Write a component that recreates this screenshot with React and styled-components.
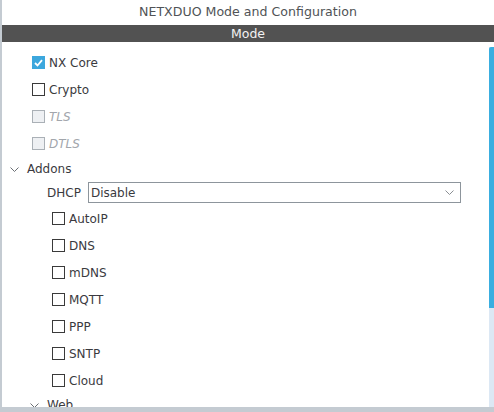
import React from 'react'
import styled, { createGlobalStyle } from 'styled-components'

const GlobalStyle = createGlobalStyle`
  html, body {
    margin: 0;
    padding: 0;
    background: #ffffff;
  }
  body {
    font-family: "DejaVu Sans", "Liberation Sans", sans-serif;
  }
`

const Chevron = ({ color = '#6b6f74' }) => (
  <svg width="9" height="5" viewBox="0 0 9 5">
    <path d="M0.5 0.5 L4.5 4.5 L8.5 0.5" fill="none" stroke={color} strokeWidth="1" />
  </svg>
)

const Check = ({ checked, disabled, indent, text }) => (
  <Row $indent={indent}>
    <Box $checked={checked} $disabled={disabled}>
      {checked && (
        <svg width="9" height="8" viewBox="0 0 9 8">
          <path d="M1 4 L3.5 6.5 L8 1.2" fill="none" stroke="#fff" strokeWidth="1.8" />
        </svg>
      )}
    </Box>
    <Label $disabled={disabled}>{text}</Label>
  </Row>
)

const topItems = [
  { text: 'NX Core', checked: true },
  { text: 'Crypto' },
  { text: 'TLS', disabled: true },
  { text: 'DTLS', disabled: true },
]

const addons = ['AutoIP', 'DNS', 'mDNS', 'MQTT', 'PPP', 'SNTP', 'Cloud']

const App = () => {
  return (
    <Frame>
      <GlobalStyle />
      <Title>NETXDUO Mode and Configuration</Title>
      <SectionBar>Mode</SectionBar>
      <Body>
        <List>
          {topItems.map((it) => (
            <Check key={it.text} indent={30} {...it} />
          ))}
          <GroupRow $indent={8} $offset={1}>
            <Chevron />
            <GroupName>Addons</GroupName>
          </GroupRow>
          <FieldRow>
            <FieldLabel>DHCP</FieldLabel>
            <Select>
              <span>Disable</span>
              <Chevron color="#8a8e93" />
            </Select>
          </FieldRow>
          {addons.map((a) => (
            <Check key={a} indent={50} text={a} />
          ))}
          <GroupRow $indent={28}>
            <Chevron />
            <GroupName>Web</GroupName>
          </GroupRow>
        </List>
        <ScrollTrack>
          <ScrollThumb />
        </ScrollTrack>
      </Body>
    </Frame>
  )
}

export default App

const Frame = styled.div`
display: flex;
flex-direction: column;
height: 412px;
box-sizing: border-box;
border-left: 2px solid #c4cbd2;
border-bottom: 5px solid #c4cbd2;
overflow: hidden;
`

const Title = styled.div`
height: 25px;
line-height: 24px;
text-align: center;
font-size: 12.6px;
color: #505356;
`

const SectionBar = styled.div`
height: 17px;
line-height: 17px;
background: #525252;
color: #f2f2f2;
text-align: center;
font-size: 12.5px;
`

const Body = styled.div`
flex: 1;
display: flex;
min-height: 0;
`

const List = styled.div`
flex: 1;
display: flex;
flex-direction: column;
padding-top: 7px;
overflow: hidden;
`

const Row = styled.div`
display: flex;
align-items: center;
flex: none;
height: 27px;
padding-left: ${(p) => p.$indent}px;
gap: 4px;
`

const Box = styled.span`
box-sizing: border-box;
width: 13px;
height: 13px;
display: flex;
align-items: center;
justify-content: center;
border: 1px solid ${(p) => (p.$checked ? '#3ca7dd' : p.$disabled ? '#aab0b6' : '#3a3a3a')};
background: ${(p) => (p.$checked ? '#3ca7dd' : p.$disabled ? '#eef0f3' : '#ffffff')};
`

const Label = styled.span`
font-size: 12px;
color: ${(p) => (p.$disabled ? '#a2a6ac' : '#3a3a3e')};
font-style: ${(p) => (p.$disabled ? 'italic' : 'normal')};
`

const GroupRow = styled.div`
display: flex;
align-items: center;
flex: none;
height: 22px;
margin-top: ${(p) => p.$offset || 0}px;
padding-left: ${(p) => p.$indent}px;
gap: 8px;
`

const GroupName = styled.span`
font-size: 12px;
color: #3a3a3e;
`

const FieldRow = styled.div`
display: flex;
align-items: center;
flex: none;
padding: 2px 0 2px 45px;
gap: 7px;
`

const FieldLabel = styled.span`
font-size: 12px;
color: #3a3a3e;
`

const Select = styled.div`
box-sizing: border-box;
width: 373px;
height: 21px;
display: flex;
align-items: center;
justify-content: space-between;
padding: 0 6px 0 2px;
border: 1px solid #8d959c;
font-size: 12px;
color: #3a3a3e;
background: #ffffff;
`

const ScrollTrack = styled.div`
width: 5px;
margin-top: 5px;
background: #dce8f4;
display: flex;
flex-direction: column;
`

const ScrollThumb = styled.div`
height: 261px;
background: #3aaee0;
border-top-left-radius: 2px;
`
